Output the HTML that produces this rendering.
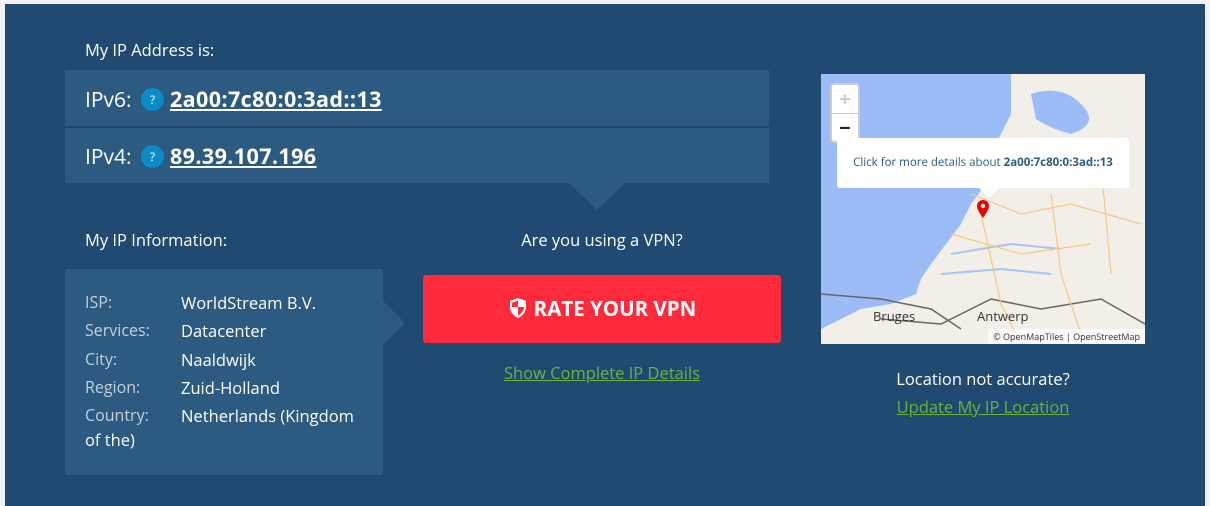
<!DOCTYPE html>
<html><head><style>
*{margin:0;padding:0;box-sizing:border-box}
body{width:1210px;height:506px;background:#f1f3f6;font-family:"Open Sans","Liberation Sans",sans-serif;position:relative;overflow:hidden}
.panel{position:absolute;left:5px;top:4px;width:1200px;height:502px;background:#214a73}
.a{position:absolute;color:#fff}
.box{position:absolute;background:#2d5a80}
.q{display:inline-block;width:23px;height:23px;border-radius:50%;background:#0a8ac6;color:#fff;font-size:12px;text-align:center;line-height:23px;vertical-align:middle;margin:0 6px 3px 4px}
.ip{font-size:21px;color:#fff;}
.ip b{text-decoration:underline;text-underline-offset:2px;font-size:21.5px;letter-spacing:0.4px}
.lbl{color:#c4d0dc;font-size:16px;position:absolute;left:20px}
.val{color:#fff;font-size:16.5px;position:absolute;left:116px}
.t{font-size:16.5px}
</style></head><body>
<div class="panel"></div>
<div class="a t" style="left:85px;top:38px">My IP Address is:</div>
<div class="box" style="left:65px;top:70px;width:704px;height:56px"></div>
<div class="box" style="left:65px;top:128px;width:704px;height:55px"></div>
<div style="position:absolute;left:569px;top:183px;width:0;height:0;border-left:28px solid transparent;border-right:28px solid transparent;border-top:27px solid #2d5a80"></div>
<div class="a ip" style="left:85px;top:85px">IPv6: <span class="q">?</span><b>2a00:7c80:0:3ad::13</b></div>
<div class="a ip" style="left:85px;top:142px">IPv4: <span class="q">?</span><b>89.39.107.196</b></div>
<div class="a t" style="left:85px;top:228px">My IP Information:</div>
<div class="box" style="left:65px;top:269px;width:318px;height:206px">
<div class="lbl" style="top:22px">ISP:</div><div class="val" style="top:22px">WorldStream B.V.</div>
<div class="lbl" style="top:50px">Services:</div><div class="val" style="top:50px">Datacenter</div>
<div class="lbl" style="top:79px">City:</div><div class="val" style="top:79px">Naaldwijk</div>
<div class="lbl" style="top:107px">Region:</div><div class="val" style="top:107px">Zuid-Holland</div>
<div class="lbl" style="top:135px">Country:</div><div class="val" style="top:135px">Netherlands (Kingdom</div>
<div class="val" style="top:159px;left:20px">of the)</div>
</div>
<div style="position:absolute;left:383px;top:301px;width:0;height:0;border-top:22px solid transparent;border-bottom:22px solid transparent;border-left:22px solid #2d5a80"></div>
<div class="a t" style="left:423px;width:358px;text-align:center;top:228px;padding-left:-10px">Are you using a VPN?</div>
<div style="position:absolute;left:423px;top:275px;width:358px;height:68px;background:#ff2a3b;border-radius:3px;color:#fff;font-weight:bold;font-size:20.5px;text-align:center;line-height:68px">
<svg width="20" height="22" viewBox="0 0 20 22" style="vertical-align:-3px;margin-right:6px"><path d="M10 1L2 4v6c0 5 3.5 9 8 11 4.5-2 8-6 8-11V4z" fill="#fff"/><path d="M10 3.5L4 5.8V10h6zM10 10v8.5c3-1.6 6-4.6 6-8.5z" fill="#ff2a3b"/></svg>RATE YOUR VPN</div>
<div style="position:absolute;left:423px;width:358px;text-align:center;top:361px;font-size:16.5px;color:#6cb33f;text-decoration:underline">Show Complete IP Details</div>
<div style="position:absolute;left:821px;top:74px;width:324px;height:270px;overflow:hidden;background:#f2efe9">
<svg width="324" height="270" style="position:absolute;left:0;top:0">
<path d="M0 0H190V40L175 70L165 110L150 130L140 150L125 170L110 190L100 205L95 220L70 230L40 235L10 250L0 255Z" fill="#9bbcf7"/>
<path d="M210 20Q240 10 260 30T250 60Q230 55 215 45Z" fill="#9bbcf7"/>
<path d="M130 180L190 170L240 175M120 200L180 195L230 200" stroke="#a8c3f0" stroke-width="2" fill="none"/>
<path d="M0 220L60 225L110 235L140 255M60 245L120 250L170 225L220 235L280 225L324 250" stroke="#666" stroke-width="1.5" fill="none"/>
<path d="M150 120L200 140L250 130L320 150M130 160L200 180L270 170M160 140L180 230L200 270M230 120L240 200L260 260M280 90L290 200" stroke="#f6c880" stroke-width="1.2" fill="none"/>
</svg>
<div style="position:absolute;left:9px;top:9px;width:30px;height:60px;background:#fff;border:2px solid rgba(0,0,0,.2);border-radius:4px;text-align:center;font-size:20px;line-height:28px;color:#ccc;font-weight:bold">+<div style="border-top:1px solid #ccc;color:#222">−</div></div>
<div style="position:absolute;left:16px;top:64px;width:292px;height:50px;background:#fff;border-radius:3px;font-size:11.5px;color:#2d5a80;line-height:50px;text-align:center">Click for more details about <b>2a00:7c80:0:3ad::13</b></div>
<div style="position:absolute;left:158px;top:114px;border-left:10px solid transparent;border-right:10px solid transparent;border-top:10px solid #fff"></div>
<svg width="14" height="20" style="position:absolute;left:155px;top:125px" viewBox="0 0 14 20"><path d="M7 19C3 13 1 10 1 7a6 6 0 0112 0c0 3-2 6-6 12z" fill="#e00"/><circle cx="7" cy="7" r="2.2" fill="#fff"/></svg>
<div style="position:absolute;left:52px;top:233px;font-size:13px;color:#333">Bruges</div>
<div style="position:absolute;left:156px;top:233px;font-size:13px;color:#333">Antwerp</div>
<div style="position:absolute;right:0;bottom:0;background:rgba(255,255,255,.7);font-size:9px;color:#333;padding:1px 5px">© OpenMapTiles | OpenStreetMap</div>
</div>
<div class="a t" style="left:821px;width:324px;text-align:center;top:367px">Location not accurate?</div>
<div style="position:absolute;left:821px;width:324px;text-align:center;top:395px;font-size:16.5px;color:#6cb33f;text-decoration:underline">Update My IP Location</div>
</body></html>
